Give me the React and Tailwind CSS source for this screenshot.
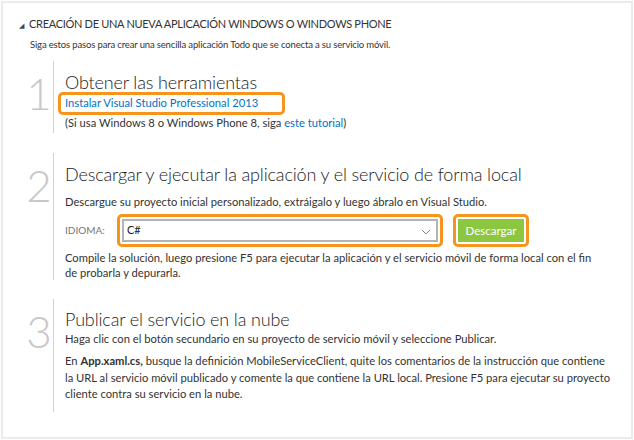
import React from "react";

const font = { fontFamily: "Lato, 'Liberation Sans', sans-serif" };

function Step({ n, children, lineClass }) {
  return (
    <div className="flex ml-[22px]">
      <div className="w-[29px] flex justify-center pt-[10px] border-r border-[#d2d2d2] shrink-0">
        <span className="text-[44px] leading-[44px] font-light text-[#c8c8c8]">{n}</span>
      </div>
      <div className={"pl-[11px] " + lineClass}>{children}</div>
    </div>
  );
}

const H = ({ children }) => (
  <div className="text-[18px] leading-[24px] tracking-[-0.15px] font-light text-[#222]">{children}</div>
);

export default function App() {
  return (
    <div className="w-[634px] h-[440px] bg-white pl-px pt-px text-[#333]" style={font}>
      <div className="w-[632px] h-[438px] border-2 border-[#ebebeb] pt-[12px]">
        <div className="flex items-center pl-[16px]">
          <span className="text-[7px] text-[#444] mr-[5px] mt-[2px]">◢</span>
          <span className="text-[11px] leading-[18px] tracking-[-0.3px] text-[#333]">CREACIÓN DE UNA NUEVA APLICACIÓN WINDOWS O WINDOWS PHONE</span>
        </div>
        <div className="pl-[27px] mt-[5px] text-[9.5px] leading-[14px] tracking-[-0.15px]">
          Siga estos pasos para crear una sencilla aplicación Todo que se conecta a su servicio móvil.
        </div>

        <div className="mt-[9px]">
          <Step n="1" lineClass="pt-[9px] pb-[2px]">
            <H>Obtener las herramientas</H>
            <div className="-ml-[7px] mt-[-2px] w-[227px] h-[23px] border-[3px] border-[#f7941d] rounded-[5px] flex items-center pl-[4px]">
              <span className="text-[11.2px] text-[#0072c6]">Instalar Visual Studio Professional 2013</span>
            </div>
            <div className="text-[11.2px] leading-[16px]">
              (Si usa Windows 8 o Windows Phone 8, siga <span className="text-[#0072c6]">este tutorial</span>)
            </div>
          </Step>
        </div>

        <div className="mt-[20px]">
          <Step n="2" lineClass="pt-[9px] pb-0">
            <H>Descargar y ejecutar la aplicación y el servicio de forma local</H>
            <div className="text-[11.2px] leading-[16px] mt-[8px]">Descargue su proyecto inicial personalizado, extráigalo y luego ábralo en Visual Studio.</div>
            <div className="flex items-center mt-[4px]">
              <span className="text-[10px] text-[#777] w-[52px]">IDIOMA:</span>
              <div className="w-[326px] h-[33px] border-[3px] border-[#f7941d] rounded-[5px] p-[2px]">
                <div className="h-full border-2 border-[#b4b4b4] flex items-center justify-between px-[3px]">
                  <span className="text-[11px] text-[#222]">C#</span>
                  <svg width="10" height="6" viewBox="0 0 10 6" className="mr-[2px] mt-[2px]">
                    <path d="M1 1 L5 5 L9 1" fill="none" stroke="#888" strokeWidth="1" />
                  </svg>
                </div>
              </div>
              <div className="ml-[10px] w-[76px] h-[33px] border-[3px] border-[#f7941d] rounded-[5px] p-[2px]">
                <div className="h-full bg-[#8dc63f] flex items-center justify-center">
                  <span className="text-[11.5px] text-white">Descargar</span>
                </div>
              </div>
            </div>
            <div className="text-[11.2px] leading-[15px] mt-[3px] w-[532px]">
              Compile la solución, luego presione F5 para ejecutar la aplicación y el servicio móvil de forma local con el fin de probarla y depurarla.
            </div>
          </Step>
        </div>

        <div className="mt-[19px]">
          <Step n="3" lineClass="pt-[8px] pb-[9px]">
            <H>Publicar el servicio en la nube</H>
            <div className="text-[11.2px] leading-[16px]">Haga clic con el botón secundario en su proyecto de servicio móvil y seleccione Publicar.</div>
            <div className="text-[11.2px] leading-[16.5px] mt-[6px] w-[548px]">
              En <b>App.xaml.cs,</b> busque la definición MobileServiceClient, quite los comentarios de la instrucción que contiene la URL al servicio móvil publicado y comente la que contiene la URL local. Presione F5 para ejecutar su proyecto cliente contra su servicio en la nube.
            </div>
          </Step>
        </div>
      </div>
    </div>
  );
}
